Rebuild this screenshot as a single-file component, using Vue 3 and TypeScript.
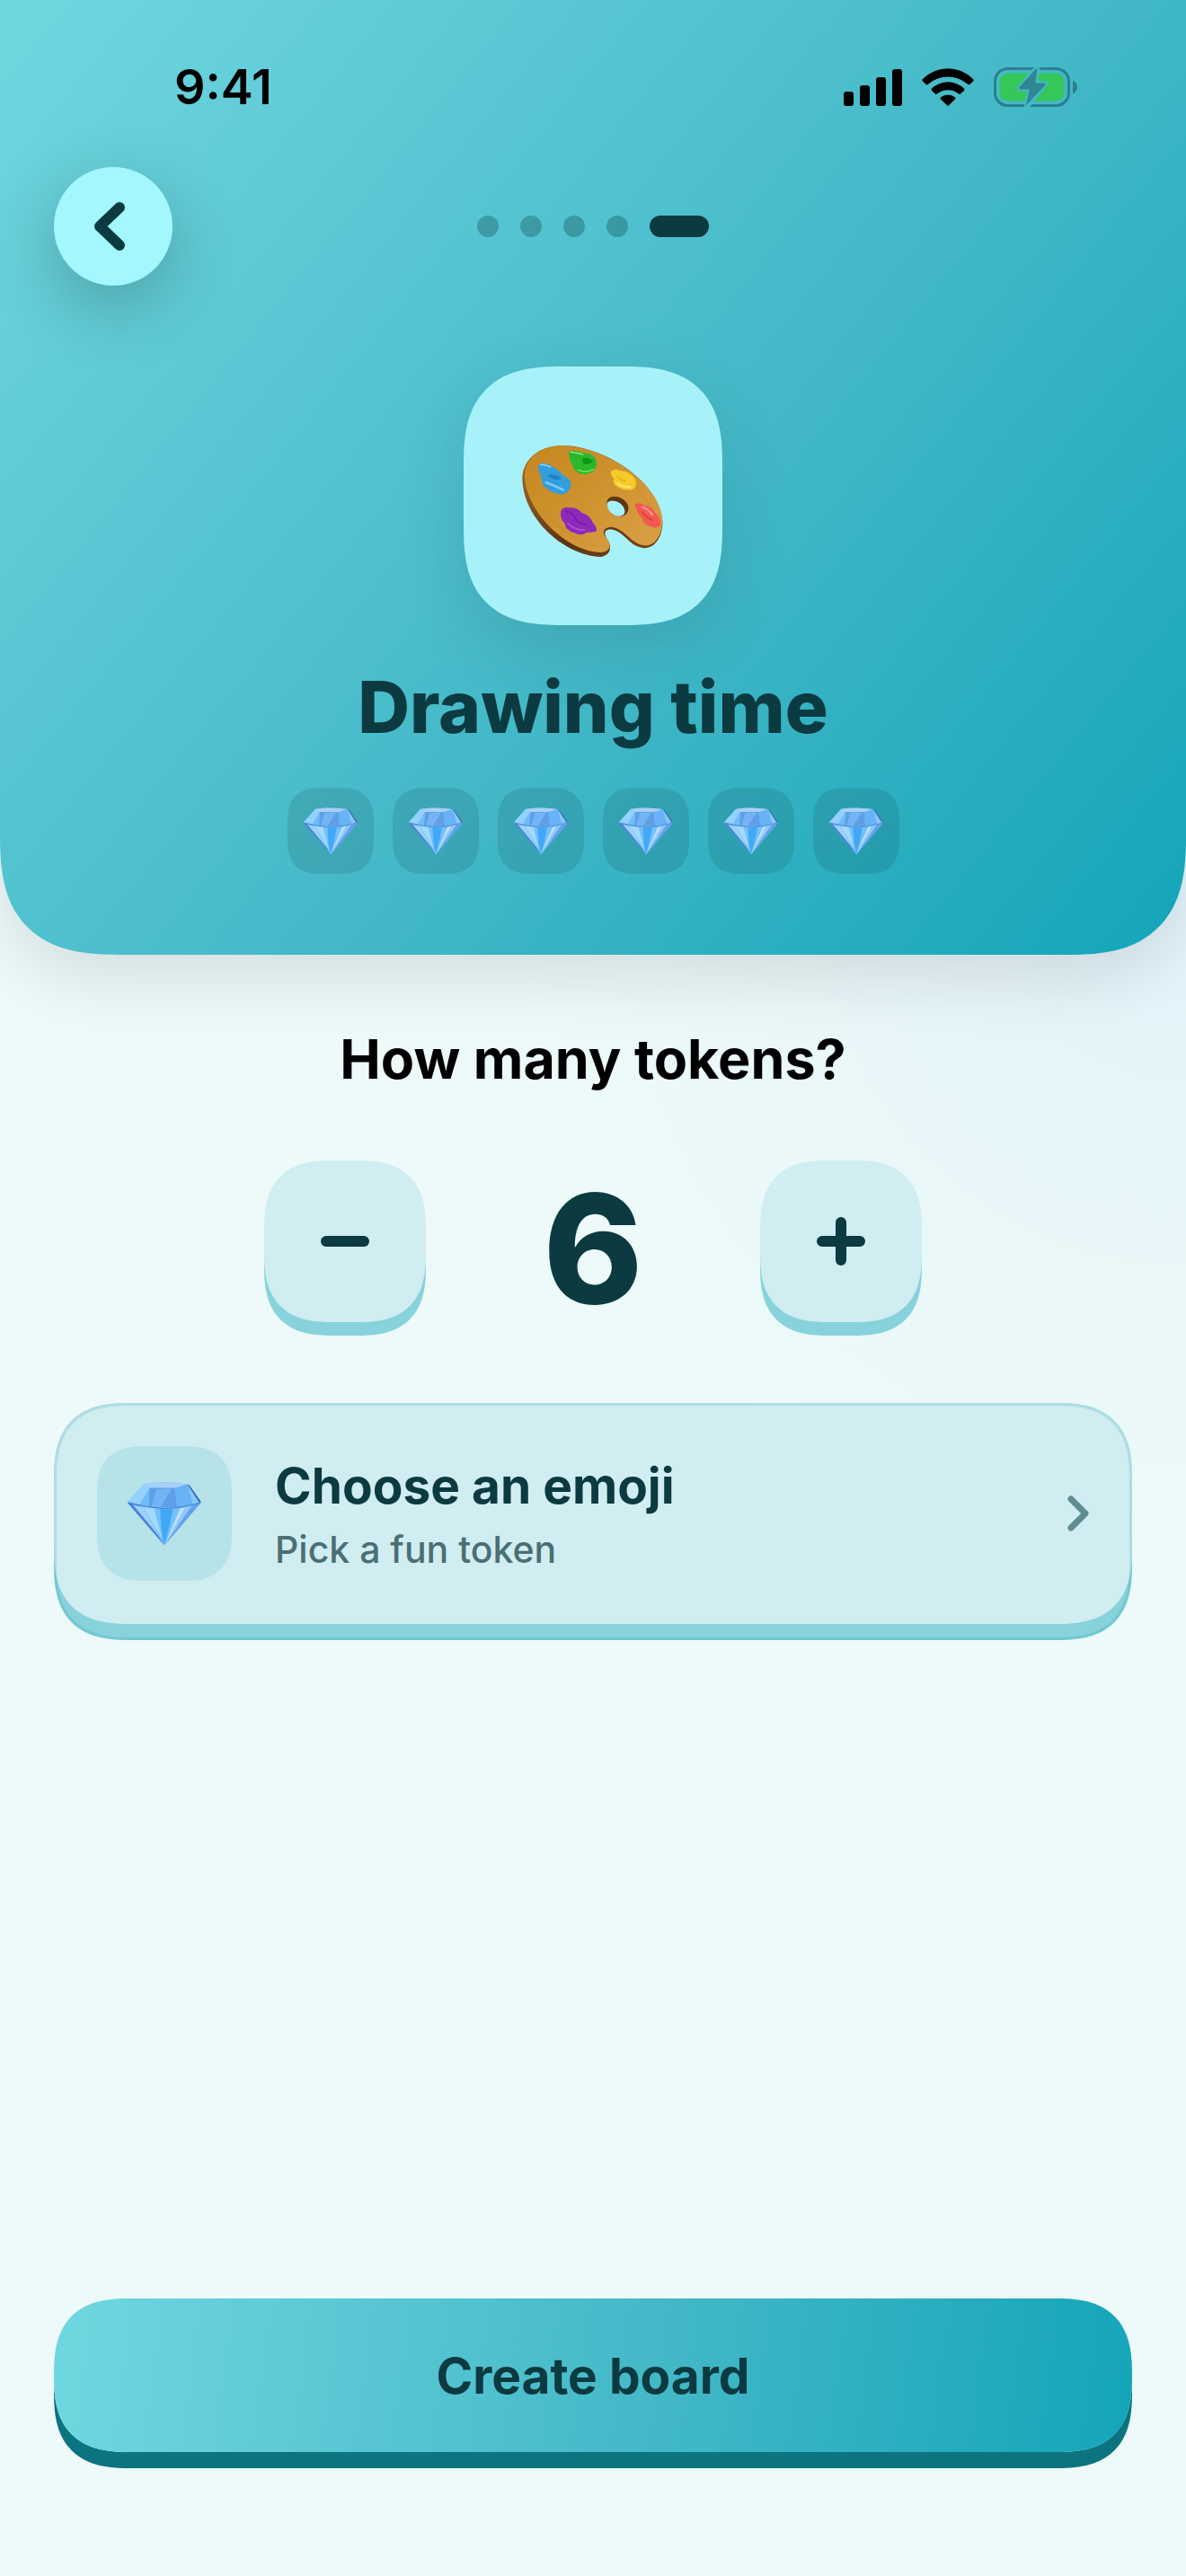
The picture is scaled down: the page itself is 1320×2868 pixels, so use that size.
<script setup lang="ts">
import { ref } from 'vue'

const activity = ref('Drawing time')
const tokens = ref(6)
const steps = 5
const currentStep = 5
const minTokens = 1
const maxTokens = 8

function change(by: number): void {
  tokens.value = Math.min(maxTokens, Math.max(minTokens, tokens.value + by))
}
</script>

<template>
  <div class="page">
    <svg class="defs" width="0" height="0" aria-hidden="true">
      <defs>
        <linearGradient id="wood" x1="0" y1="0" x2="1" y2="1">
          <stop offset="0" stop-color="#c58720" />
          <stop offset="0.5" stop-color="#cf932f" />
          <stop offset="1" stop-color="#dba049" />
        </linearGradient>
        <linearGradient id="woodEdge" x1="0" y1="0" x2="1" y2="1">
          <stop offset="0" stop-color="#a8702a" />
          <stop offset="0.6" stop-color="#5c3213" />
          <stop offset="1" stop-color="#7c4a1c" />
        </linearGradient>
        <symbol id="gem" viewBox="330 358 248 216">
          <path d="M332 430L386 369Q455 358 529 370L575 429L454 571Z" fill="#6ab8f8" />
          <path d="M332 430L386 369L405 382L402 442Z" fill="#93d2fc" />
          <path d="M386 369Q455 358 529 370L488 383H405Z" fill="#a9d0fb" />
          <path d="M405 382H488L495 445L402 444Z" fill="#5f9fe8" />
          <path d="M428 386L478 384L440 446L410 445Z" fill="#74b4f4" />
          <path d="M405 382L402 442L372 437Z" fill="#6fbdf8" />
          <path d="M488 383L529 370L548 437L495 445Z" fill="#68b2f6" />
          <path d="M529 370L575 429L548 437Z" fill="#86c8fb" />
          <path d="M529 370L537 374L575 428L568 430Z" fill="#3f6fb4" />
          <path d="M332 430L372 440L454 571Z" fill="#4c80d8" />
          <path d="M350 437L384 446L444 550Z" fill="#9ad2fc" />
          <path d="M384 444Q455 457 523 444L454 571Z" fill="#74c0fa" />
          <path d="M384 445L420 449L446 548Z" fill="#a2d9fd" />
          <path d="M440 452H482L470 510L454 571L444 520Z" fill="#41a8f6" />
          <path d="M523 444L572 431L454 571Z" fill="#8fc8fa" />
          <path d="M506 450L523 444L454 571Z" fill="#c0e1fd" />
          <path d="M545 440L575 429L454 571Z" fill="#62a0ee" />
          <path d="M335 430Q395 446 454 450Q520 448 572 430" fill="none" stroke="#4580c6" stroke-width="3" />
        </symbol>
      </defs>
    </svg>

    <header class="hero smooth">
      <div class="status">
        <span class="time">9:41</span>
        <div class="indicators" aria-hidden="true">
          <svg width="65" height="42" viewBox="0 0 65 42">
            <rect x="0" y="26" width="11" height="16" rx="3" />
            <rect x="18" y="19" width="11" height="23" rx="3" />
            <rect x="36" y="10" width="11" height="32" rx="3" />
            <rect x="54" y="1" width="11" height="41" rx="3" />
          </svg>
          <svg width="58" height="42" viewBox="0 0 58 42">
            <path d="M1.2 11.8A39 39 0 0 1 56.8 11.8Q58.4 13.2 57 14.6L53.4 18Q52.5 18.8 51.5 18A34 34 0 0 0 6.5 18Q5.5 18.8 4.6 18L1 14.6Q-.4 13.2 1.2 11.8Z" />
            <path d="M11 22.6A26 26 0 0 1 47 22.6Q48 23.8 47 24.9L43 28.5Q42 29.3 41 28.4A19 19 0 0 0 17 28.4Q16 29.3 15 28.5L11 24.9Q10 23.8 11 22.6Z" />
            <path d="M21.2 32.3A12 12 0 0 1 36.8 32.3Q38 33.5 37 34.6L30 41.3Q29 42.3 28 41.3L21 34.6Q20 33.5 21.2 32.3Z" />
          </svg>
          <svg width="94" height="44" viewBox="0 0 94 44">
            <mask id="boltGap">
              <rect width="94" height="44" fill="#fff" />
              <path d="M49 -1L28 24H40L36 45L58 18H46.5Z" fill="#000" stroke="#000" stroke-width="5" stroke-linejoin="round" />
            </mask>
            <g mask="url(#boltGap)">
              <rect x="1.5" y="1.5" width="82" height="41" rx="14" fill="none" stroke="#2a7f8d" stroke-width="3" />
              <rect x="6.5" y="6.5" width="72" height="31" rx="9" fill="#35c759" />
            </g>
            <path d="M48.5 0L28.5 22Q27.5 24.5 30 24.5H40L35.5 43L57 20Q58.5 17.6 56 17.5H46.5Z" fill="#2f8592" />
            <path d="M88 14.5Q93 17 93 22T88 29.5Z" fill="#2a7f8d" />
          </svg>
        </div>
      </div>

      <nav class="nav" aria-label="Setup steps">
        <button class="back" type="button" aria-label="Back">
          <svg width="34" height="54" viewBox="0 0 34 54" aria-hidden="true">
            <path d="M28 6L6 27L28 48" />
          </svg>
        </button>
        <ol class="dots">
          <li v-for="n in steps" :key="n" :class="{ current: n === currentStep }" />
        </ol>
      </nav>

      <div class="picture smooth">
        <svg width="160" height="140" viewBox="300 306 480 420" role="img" aria-label="Artist palette">
          <path
            fill="url(#woodEdge)"
            fill-rule="evenodd"
            d="M304 462C302 402 352 348 440 348C580 350 760 470 772 598C774 650 750 690 712 691C660 688 645 632 598 628C570 630 580 652 592 668C604 690 596 716 566 720C450 716 310 600 304 462ZM587 542C592 526 632 530 644 558C652 580 636 586 620 584C600 578 584 560 587 542Z"
          />
          <path
            fill="url(#wood)"
            fill-rule="evenodd"
            d="M312 440C318 390 362 349 440 349C580 352 758 470 771 590C774 640 752 680 716 682C664 678 650 625 600 620C568 622 572 645 588 662C604 684 596 702 566 705C450 704 306 560 312 440ZM587 534C593 510 640 514 656 546C666 574 640 590 620 584C598 578 584 556 587 534Z"
          />
          <path d="M330 420Q400 470 520 560M420 352Q500 430 580 510M620 420Q690 490 740 560M360 560Q460 660 560 690" fill="none" stroke="#b97b20" stroke-width="3" opacity=".35" />
          <path fill="#2ab82b" d="M459 370Q472 362 492 368Q512 374 530 375Q558 392 551 418Q544 443 508 444Q478 440 472 414Q460 398 459 370Z" />
          <path fill="#0f9614" d="M504 392Q526 384 540 402Q526 414 508 408Z" />
          <path d="M466 370Q490 372 506 378" fill="none" stroke="#a8f09a" stroke-width="4" stroke-linecap="round" />
          <path d="M490 430Q515 442 540 428" fill="none" stroke="#69dc5c" stroke-width="5" stroke-linecap="round" />
          <path fill="#329fdd" d="M357 412Q372 402 396 414Q424 426 440 448Q470 462 466 484Q462 506 438 512Q400 508 378 486Q366 468 366 446Q354 428 357 412Z" />
          <path fill="#1f83c6" d="M388 448Q412 438 436 460Q410 470 388 448Z" />
          <path d="M384 472Q410 482 440 496" fill="none" stroke="#7fc8f4" stroke-width="8" stroke-linecap="round" />
          <path d="M364 412Q380 410 398 420" fill="none" stroke="#8fd8fb" stroke-width="4" stroke-linecap="round" />
          <path fill="#f6cb28" d="M600 434Q612 424 630 432Q664 434 682 462Q690 484 672 496Q640 500 618 484Q604 474 610 460Q598 448 600 434Z" />
          <path d="M622 452Q632 466 650 466" fill="none" stroke="#e2b01a" stroke-width="4" stroke-linecap="round" />
          <path d="M622 474Q640 488 664 486" fill="none" stroke="#ffe977" stroke-width="6" stroke-linecap="round" />
          <path fill="#f25a50" d="M679 544Q692 536 710 546Q736 550 748 574Q768 590 766 612Q756 630 732 618Q710 614 702 590Q684 570 679 544Z" />
          <path d="M704 570Q716 588 740 598" fill="none" stroke="#d63f3f" stroke-width="5" stroke-linecap="round" />
          <path d="M706 554Q728 562 738 580" fill="none" stroke="#ff9d94" stroke-width="6" stroke-linecap="round" />
          <path fill="#8d2abb" d="M433 566Q440 552 462 556Q486 554 502 572Q530 580 538 604Q552 618 552 634Q536 640 520 638Q498 652 478 640Q448 632 446 610Q428 590 433 566Z" />
          <path d="M448 568Q470 568 480 590T520 612" fill="none" stroke="#761ba3" stroke-width="5" stroke-linecap="round" />
          <path d="M456 608Q480 632 512 630" fill="none" stroke="#ab50d2" stroke-width="5" stroke-linecap="round" />
        </svg>
      </div>

      <h1>{{ activity }}</h1>

      <ul class="tokens" aria-label="Tokens">
        <li v-for="n in tokens" :key="n" class="smooth">
          <svg width="62" height="54" aria-hidden="true"><use href="#gem" /></svg>
        </li>
      </ul>
    </header>

    <main class="content">
      <h2>How many tokens?</h2>

      <div class="stepper">
        <button class="step smooth" type="button" aria-label="Fewer tokens" @click="change(-1)">
          <svg width="54" height="54" viewBox="0 0 54 54" aria-hidden="true"><path d="M6 27H48" /></svg>
        </button>
        <output class="count">{{ tokens }}</output>
        <button class="step smooth" type="button" aria-label="More tokens" @click="change(1)">
          <svg width="54" height="54" viewBox="0 0 54 54" aria-hidden="true"><path d="M6 27H48M27 6V48" /></svg>
        </button>
      </div>

      <button class="card smooth" type="button">
        <span class="face smooth">
          <span class="thumb smooth">
            <svg width="84" height="74" aria-hidden="true"><use href="#gem" /></svg>
          </span>
          <span class="labels">
            <span class="label">Choose an emoji</span>
            <span class="hint">Pick a fun token</span>
          </span>
          <svg class="chevron" width="24" height="40" viewBox="0 0 24 40" aria-hidden="true">
            <path d="M4 4L20 20L4 36" />
          </svg>
        </span>
      </button>
    </main>

    <footer class="footer">
      <button class="create smooth" type="button">Create board</button>
    </footer>
  </div>
</template>

<style>
body {
  margin: 0;
}
</style>

<style scoped>
.page {
  --ink: #0b3a40;
  --face: #d0edf1;
  --edge: #88d3db;
  display: flex;
  flex-direction: column;
  min-height: 100vh;
  font-family: Inter, "Liberation Sans", sans-serif;
  color: var(--ink);
  background: radial-gradient(circle 740px at 100% 35%, #e2f3fa 0%, #e9f7f9 55%, #edfaf9 100%);
}

.defs {
  position: absolute;
}

button {
  padding: 0;
  border: 0;
  font: inherit;
  color: inherit;
  cursor: pointer;
}

ol,
ul {
  margin: 0;
  padding: 0;
  list-style: none;
}

h1,
h2 {
  margin: 0;
  text-align: center;
}

.smooth {
  border-radius: var(--r);
}

@supports (corner-shape: squircle) {
  .smooth {
    border-radius: calc(var(--r) * 1.3);
    corner-shape: superellipse(1.4);
  }
}

.hero {
  --r: 102px;
  display: flex;
  flex-direction: column;
  align-items: center;
  padding-bottom: 90px;
  border-top-left-radius: 0;
  border-top-right-radius: 0;
  background: linear-gradient(129deg, #70d7e0, #43b8c7 57%, #14a5b9);
  box-shadow: 0 30px 72px rgba(0, 0, 0, 0.1);
}

.status {
  box-sizing: border-box;
  display: flex;
  justify-content: space-between;
  align-items: center;
  width: 100%;
  height: 186px;
  padding: 8px 120px 0 194px;
}

.time {
  font-size: 54px;
  font-weight: 600;
  line-height: 60px;
  color: #000;
}

.indicators {
  display: flex;
  align-items: center;
  gap: 22px;
}

.nav {
  box-sizing: border-box;
  display: grid;
  grid-template-columns: 1fr auto 1fr;
  align-items: center;
  width: 100%;
  padding: 0 60px;
}

.back {
  display: flex;
  align-items: center;
  justify-content: center;
  width: 132px;
  height: 132px;
  padding-right: 8px;
  border-radius: 50%;
  background: #a4f7fe;
  box-shadow: 0 24px 72px rgba(40, 60, 60, 0.3);
}

.back path {
  fill: none;
  stroke: var(--ink);
  stroke-width: 12;
  stroke-linecap: round;
  stroke-linejoin: round;
}

.dots {
  display: flex;
  gap: 24px;
}

.dots li {
  width: 24px;
  height: 24px;
  border-radius: 12px;
  background: rgba(11, 58, 64, 0.3);
}

.dots .current {
  width: 66px;
  background: var(--ink);
}

.picture {
  --r: 84px;
  display: flex;
  align-items: center;
  justify-content: center;
  width: 288px;
  height: 288px;
  margin: 90px 0 42px;
  background: #a7f2f9;
  box-shadow: 0 24px 72px rgba(40, 60, 60, 0.14);
}

h1 {
  font-size: 80px;
  font-weight: 800;
  line-height: 97px;
}

.tokens {
  display: flex;
  gap: 21px;
  margin-top: 42px;
}

.tokens li {
  --r: 30px;
  display: flex;
  align-items: center;
  justify-content: center;
  width: 96px;
  height: 96px;
  background: rgba(11, 58, 64, 0.14);
}

.content {
  display: flex;
  flex-direction: column;
  gap: 75px;
  padding: 78px 60px 60px;
}

h2 {
  font-size: 61px;
  font-weight: 700;
  line-height: 76px;
  color: #000;
}

.stepper {
  display: flex;
  align-items: center;
  justify-content: center;
}

.step {
  --r: 60px;
  display: flex;
  align-items: center;
  justify-content: center;
  width: 180px;
  height: 180px;
  margin-bottom: 15px;
  background: var(--face);
  box-shadow: 0 15px 0 var(--edge);
}

.step path {
  fill: none;
  stroke: var(--ink);
  stroke-width: 12;
  stroke-linecap: round;
}

.count {
  width: 372px;
  font-size: 168px;
  font-weight: 800;
  line-height: 180px;
  text-align: center;
}

.card {
  --r: 66px;
  position: relative;
  width: 100%;
  padding-bottom: 18px;
  text-align: left;
  background: var(--edge);
}

.card::after {
  content: "";
  position: absolute;
  inset: 0;
  border: 3px solid rgba(23, 150, 165, 0.18);
  border-radius: inherit;
  corner-shape: inherit;
  pointer-events: none;
}

.face {
  display: flex;
  align-items: center;
  gap: 48px;
  padding: 48px;
  background: var(--face);
}

.thumb {
  --r: 42px;
  display: flex;
  align-items: center;
  justify-content: center;
  width: 150px;
  height: 150px;
  background: #b6e3e8;
}

.labels {
  display: flex;
  flex: 1;
  flex-direction: column;
  gap: 12px;
}

.label {
  font-size: 55px;
  font-weight: 700;
  line-height: 68px;
}

.hint {
  font-size: 41px;
  font-weight: 500;
  line-height: 50px;
  color: #4a6f74;
}

.chevron path {
  fill: none;
  stroke: #5f8c91;
  stroke-width: 7;
  stroke-linecap: round;
  stroke-linejoin: round;
}

.footer {
  margin-top: auto;
  padding: 0 60px 138px;
}

.create {
  --r: 66px;
  display: block;
  width: 100%;
  height: 171px;
  font-size: 55px;
  font-weight: 700;
  background: linear-gradient(98deg, #70d7e0, #43b8c7 56%, #14a5b9);
  box-shadow: 0 18px 0 #0c7480;
}
</style>
